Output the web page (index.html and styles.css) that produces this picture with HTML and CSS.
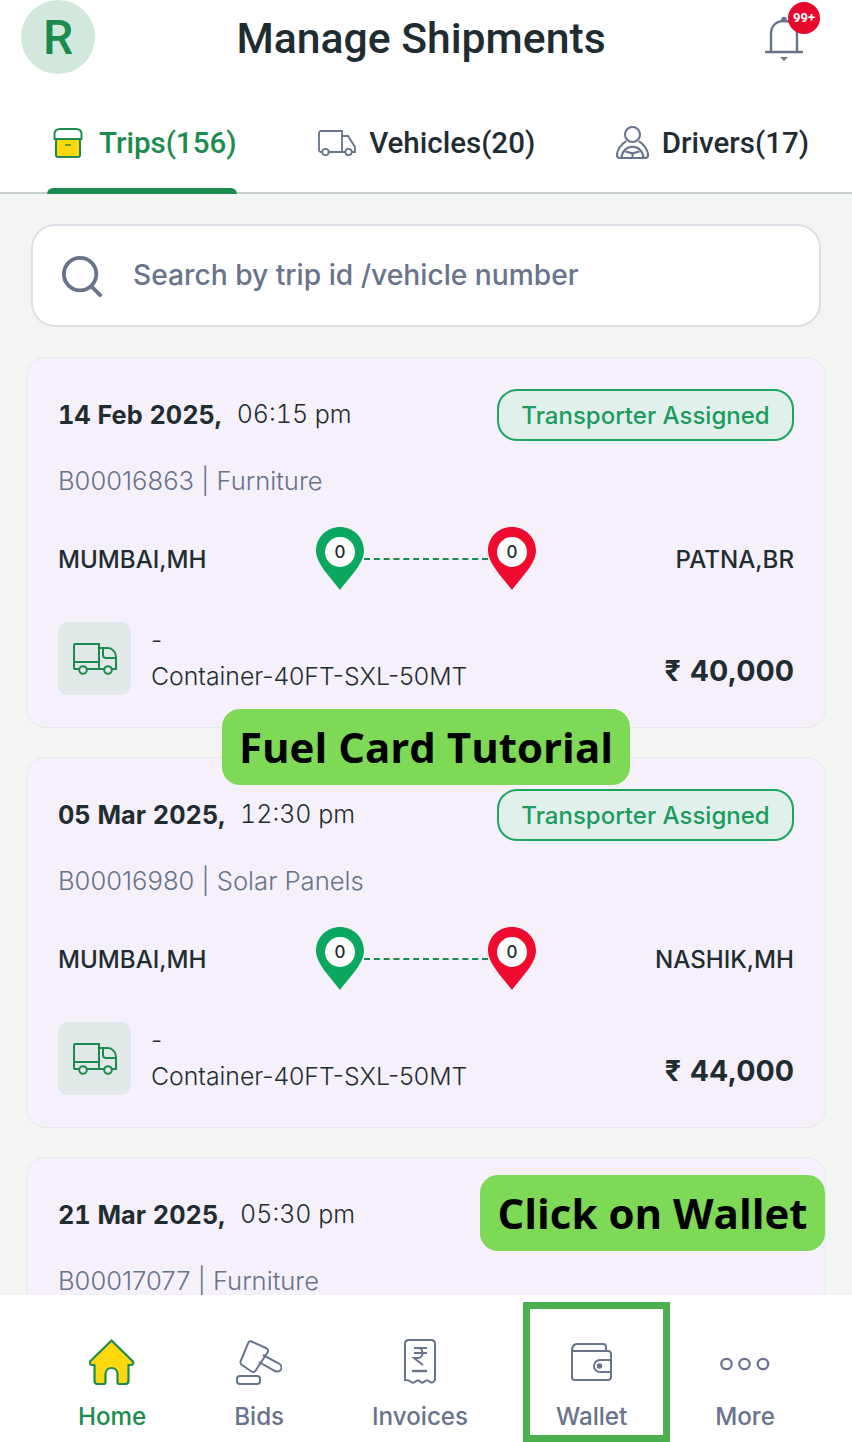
FILE: index.html
```html
<!DOCTYPE html>
<html lang="en">
<head>
  <meta charset="UTF-8">
  <meta name="viewport" content="width=device-width, initial-scale=1.0">
  <title>Manage Shipments</title>
  <link rel="stylesheet" href="styles.css">
</head>
<body>

<div class="app">

  <header class="top">
    <div class="top-row">
      <div class="avatar">R</div>
      <h1 class="title">Manage Shipments</h1>
      <div class="bell">
        <svg width="38" height="46" viewBox="0 0 38 46" fill="none" stroke="#68738c" stroke-width="2.4">
          <path d="M6 35V18C6 10 11 5 19 5C27 5 32 10 32 18V35"/>
          <path d="M1 36H37" stroke-width="2.6" stroke-linecap="round"/>
          <circle cx="19" cy="3.500" r="2.800" fill="#68738c" stroke="none"/>
          <path d="M15 41H23L19 45Z" fill="#68738c" stroke="none"/>
        </svg>
        <span class="bell-count">99+</span>
      </div>
    </div>
    <nav class="tabs">
      <div class="tab tab-active">
        <svg width="30" height="30" viewBox="0 0 30 30" fill="none" stroke="#1c8c4e" stroke-width="2">
          <rect x="3" y="11" width="24" height="18" rx="2" fill="#fdd80f"/>
          <path d="M1.500 11V6C1.500 3 3.500 1 7 1H23C26.500 1 28.500 3 28.500 6V11Z" fill="#fff"/>
          <path d="M12 17H18" stroke-width="1.400"/>
        </svg>
        <span>Trips(156)</span>
      </div>
      <div class="tab">
        <svg width="38" height="26" viewBox="0 0 38 26" fill="none" stroke="#68738c" stroke-width="1.800">
          <path d="M4 22H3C2 22 1 21 1 20V3C1 2 2 1 3 1H24V22H11"/>
          <path d="M24 6H30L37 17V22H34M27 22H24"/>
          <circle cx="7.500" cy="22" r="3.200"/>
          <circle cx="30.500" cy="22" r="3.200"/>
        </svg>
        <span>Vehicles(20)</span>
      </div>
      <div class="tab">
        <svg width="33" height="33" viewBox="0 0 35 35" fill="none" stroke="#68738c" stroke-width="2.200">
          <circle cx="17.500" cy="9" r="8"/>
          <path d="M11 16C5 19 1 26 1 31C1 33 2 34 4 34H31C33 34 34 33 34 31C34 26 30 19 24 16"/>
          <path d="M6 34C6 27 11 22 17.500 22C24 22 29 27 29 34"/>
          <path d="M10 27L17.500 29L25 27M17.500 29V34"/>
        </svg>
        <span>Drivers(17)</span>
      </div>
    </nav>
  </header>

  <main class="content">
    <div class="search">
      <svg width="42" height="42" viewBox="0 0 44 44" fill="none" stroke="#68738c" stroke-width="4" stroke-linecap="round">
        <circle cx="20" cy="20" r="17"/>
        <path d="M32 33L41 42"/>
      </svg>
      <span class="search-text">Search by trip id /vehicle number</span>
    </div>

    <div class="card">
      <div class="card-top">
        <div class="when"><b>14 Feb 2025,</b><span>06:15 pm</span></div>
        <div class="status">Transporter Assigned</div>
      </div>
      <div class="ref">B00016863 | Furniture</div>
      <div class="route">
        <div class="city">MUMBAI,MH</div>
        <div class="pins">
          <div class="pin">
            <svg width="48" height="63" viewBox="0 0 48 63"><path d="M24 0C37 0 48 10 48 24C48 36 34 50 24 63C14 50 0 36 0 24C0 10 11 0 24 0Z" fill="#0aa85f"/></svg>
            <span class="pin-num">0</span>
          </div>
          <div class="dash"></div>
          <div class="pin">
            <svg width="48" height="63" viewBox="0 0 48 63"><path d="M24 0C37 0 48 10 48 24C48 36 34 50 24 63C14 50 0 36 0 24C0 10 11 0 24 0Z" fill="#ee0b2f"/></svg>
            <span class="pin-num">0</span>
          </div>
        </div>
        <div class="city city-end">PATNA,BR</div>
      </div>
      <div class="card-bottom">
        <div class="truck">
          <svg width="44" height="32" viewBox="0 0 44 32" fill="none" stroke="#1c8c4e" stroke-width="2">
            <path d="M7 26H2C1.500 26 1 25.500 1 25V2C1 1.500 1.500 1 2 1H26V26H13"/>
            <path d="M1 19H26"/>
            <path d="M26 5H35C39 5 43 9 43 14V26H38M32 26H26"/>
            <path d="M30 5V12C30 14 31 15 33 15H43"/>
            <circle cx="10" cy="27" r="3.800"/>
            <circle cx="35" cy="27" r="3.800"/>
          </svg>
        </div>
        <div class="vehicle">
          <div>-</div>
          <div>Container-40FT-SXL-50MT</div>
        </div>
        <div class="price">₹ 40,000</div>
      </div>
    </div>

    <div class="card">
      <div class="card-top">
        <div class="when"><b>05 Mar 2025,</b><span>12:30 pm</span></div>
        <div class="status">Transporter Assigned</div>
      </div>
      <div class="ref">B00016980 | Solar Panels</div>
      <div class="route">
        <div class="city">MUMBAI,MH</div>
        <div class="pins">
          <div class="pin">
            <svg width="48" height="63" viewBox="0 0 48 63"><path d="M24 0C37 0 48 10 48 24C48 36 34 50 24 63C14 50 0 36 0 24C0 10 11 0 24 0Z" fill="#0aa85f"/></svg>
            <span class="pin-num">0</span>
          </div>
          <div class="dash"></div>
          <div class="pin">
            <svg width="48" height="63" viewBox="0 0 48 63"><path d="M24 0C37 0 48 10 48 24C48 36 34 50 24 63C14 50 0 36 0 24C0 10 11 0 24 0Z" fill="#ee0b2f"/></svg>
            <span class="pin-num">0</span>
          </div>
        </div>
        <div class="city city-end">NASHIK,MH</div>
      </div>
      <div class="card-bottom">
        <div class="truck">
          <svg width="44" height="32" viewBox="0 0 44 32" fill="none" stroke="#1c8c4e" stroke-width="2">
            <path d="M7 26H2C1.500 26 1 25.500 1 25V2C1 1.500 1.500 1 2 1H26V26H13"/>
            <path d="M1 19H26"/>
            <path d="M26 5H35C39 5 43 9 43 14V26H38M32 26H26"/>
            <path d="M30 5V12C30 14 31 15 33 15H43"/>
            <circle cx="10" cy="27" r="3.800"/>
            <circle cx="35" cy="27" r="3.800"/>
          </svg>
        </div>
        <div class="vehicle">
          <div>-</div>
          <div>Container-40FT-SXL-50MT</div>
        </div>
        <div class="price">₹ 44,000</div>
      </div>
    </div>

    <div class="card">
      <div class="card-top">
        <div class="when"><b>21 Mar 2025,</b><span>05:30 pm</span></div>
      </div>
      <div class="ref">B00017077 | Furniture</div>
    </div>
  </main>

  <nav class="bottom">
    <div class="bottom-item bottom-active">
      <div class="bottom-icon">
        <svg width="46" height="46" viewBox="0 0 46 46" stroke="#1c8c4e" stroke-width="2.200" stroke-linejoin="round">
          <path d="M22.500 1.500L43.500 22C45 24 44 26 42 26H39.500V42C39.500 44 38 45 36 45H30C29 45 28.500 44.500 28.500 43V35C28.500 27 16.500 27 16.500 35V43C16.500 44.500 16 45 15 45H9C7 45 5.500 44 5.500 42V26H3C1 26 0 24 1.500 22Z" fill="#fdd80f"/>
        </svg>
      </div>
      <span>Home</span>
    </div>
    <div class="bottom-item">
      <div class="bottom-icon">
        <svg width="46" height="45" viewBox="0 0 46 45" fill="none" stroke="#68738c" stroke-width="2">
          <path d="M15.500 1.500L30 8C32 9 32.500 11 31.500 12.500L20 30C19 32 17 32.500 15.500 31.500L6 25C4.500 24 4 22 5 20.500L12 3.500C12.500 1.500 13.500 1 15.500 1.500Z"/>
          <path d="M27 15L43 23.500C45.500 25 46 28 45 29.500C44 31.500 41 32 39 31L23 22"/>
          <rect x="1" y="36" width="23" height="8" rx="3"/>
        </svg>
      </div>
      <span>Bids</span>
    </div>
    <div class="bottom-item">
      <div class="bottom-icon">
        <svg width="32" height="46" viewBox="0 0 32 46" fill="none" stroke="#68738c" stroke-width="2">
          <path d="M1 41V5C1 2.500 2.500 1 5 1H27C29.500 1 31 2.500 31 5V41C29 44 27 44 25.500 42.500C24 41 22 41 20.500 42.500C19 44 17.500 44 16 42.500C14.500 41 13 41 11.500 42.500C10 44 8 44 6.500 42.500C5 41 3 41 1 41Z"/>
          <path d="M10 9H23M10 14H23M14 9C20 9 20 19 14 19H10L19 26"/>
          <path d="M8 32H23" stroke-width="2.400"/>
        </svg>
      </div>
      <span>Invoices</span>
    </div>
    <div class="bottom-item">
      <div class="bottom-icon">
        <svg width="41" height="38" viewBox="0 0 41 38" fill="none" stroke="#68738c" stroke-width="2">
          <path d="M1 8C1 3 3 1 6 1H32C34 1 35 2 35 4V8"/>
          <path d="M1 8V34C1 36 2 37 4 37H37C39 37 40 36 40 34V11C40 9 39 8 37 8Z"/>
          <path d="M40 17H29C25.500 17 23 20 23 23C23 26 25.500 29 29 29H40Z" fill="#fff"/>
          <circle cx="28.500" cy="23" r="1.800" fill="#68738c"/>
        </svg>
      </div>
      <span>Wallet</span>
    </div>
    <div class="bottom-item">
      <div class="bottom-icon">
        <svg width="50" height="18" viewBox="0 0 50 18" fill="none" stroke="#68738c" stroke-width="2.200">
          <circle cx="6.500" cy="11" r="5.200"/>
          <circle cx="24.500" cy="11" r="5.200"/>
          <circle cx="43" cy="11" r="5.200"/>
        </svg>
      </div>
      <span>More</span>
    </div>
  </nav>

  <div class="tag tag-fuel">Fuel Card Tutorial</div>
  <div class="tag tag-wallet">Click on Wallet</div>
  <div class="wallet-box"></div>

</div>

</body>
</html>
```

FILE: styles.css
```css
* {
  box-sizing: border-box;
}

html, body {
  margin: 0;
  padding: 0;
}

body {
  font-family: 'Inter', sans-serif;
  color: #1f2d33;
  background: #f2f5f1;
}

.app {
  position: relative;
  width: 852px;
  height: 1442px;
  overflow: hidden;
  display: flex;
  flex-direction: column;
}

/* header + tabs */
.top {
  background: #fff;
  height: 194px;
  flex-shrink: 0;
  border-bottom: 2px solid #c9ced1;
}

.top-row {
  display: flex;
  align-items: center;
  justify-content: space-between;
  height: 76px;
  padding: 0 49px 0 21px;
}

.avatar {
  width: 74px;
  height: 74px;
  align-self: flex-start;
  border-radius: 50%;
  background: #d2e8dc;
  color: #1c8c4e;
  font-family: 'Roboto', sans-serif;
  font-weight: 500;
  font-size: 48px;
  display: flex;
  align-items: center;
  justify-content: center;
}

.title {
  margin: 0 18px 0 0;
  font-family: 'Roboto', sans-serif;
  font-weight: 500;
  font-size: 42.700px;
  color: #1f2d33;
}

.bell {
  position: relative;
  width: 38px;
  height: 46px;
  margin-top: 1px;
}

.bell svg {
  display: block;
}

.bell-count {
  position: absolute;
  top: -14px;
  left: 23px;
  width: 32px;
  height: 32px;
  border-radius: 50%;
  background: #e8082e;
  color: #fff;
  font-family: 'Roboto', sans-serif;
  font-weight: 700;
  font-size: 13px;
  display: flex;
  align-items: center;
  justify-content: center;
}

.tabs {
  display: flex;
  justify-content: space-between;
  height: 116px;
  padding: 0 43px 0 47px;
}

.tab {
  display: flex;
  align-items: center;
  gap: 13px;
  height: 100%;
  padding-top: 17px;
  font-family: 'Roboto', sans-serif;
  font-weight: 500;
  font-size: 29.500px;
  color: #1f2d33;
}

.tab-active {
  position: relative;
  color: #1c8c4e;
  padding: 17px 1px 0 6px;
  gap: 16px;
}

.tab-active::after {
  content: "";
  position: absolute;
  left: 0;
  right: 0;
  bottom: -2px;
  height: 6px;
  background: #1c8c4e;
  border-radius: 6px 6px 0 0;
}

/* list */
.content {
  flex: 1;
  min-height: 0;
  overflow: hidden;
  padding: 30px 26px 0;
}

.search {
  display: flex;
  align-items: center;
  gap: 30px;
  height: 103px;
  margin: 0 5px 30px;
  padding-left: 28px;
  background: #fff;
  border: 2px solid #dcdfe6;
  border-radius: 24px;
}

.search-text {
  margin-top: -2px;
  font-size: 28.200px;
  font-weight: 500;
  color: #68738c;
}

.card {
  height: 371px;
  margin-bottom: 29px;
  padding: 31px;
  background: #f5f0f9;
  border: 1px solid #e8e8ec;
  border-radius: 20px;
}

.card-top {
  display: flex;
  align-items: center;
  justify-content: space-between;
  height: 52px;
}

.when {
  display: flex;
  gap: 15px;
  margin-top: -2px;
  font-size: 25.300px;
  font-variant-numeric: tabular-nums;
}

.when span {
  font-size: 25px;
  font-weight: 300;
}

.status {
  width: 297px;
  height: 52px;
  border: 2px solid #1ca362;
  border-radius: 20px;
  background: #e2f0ec;
  color: #1c9c5c;
  font-size: 24px;
  font-weight: 500;
  display: flex;
  align-items: center;
  justify-content: center;
}

.ref {
  margin-top: 25px;
  font-size: 25.600px;
  font-weight: 300;
  line-height: 30px;
  color: #68738c;
}

.route {
  display: grid;
  grid-template-columns: 1fr auto 1fr;
  align-items: center;
  margin-top: 31px;
}

.city {
  font-size: 24.100px;
  font-weight: 500;
  padding-top: 2px;
}

.city-end {
  text-align: right;
}

.pins {
  display: flex;
  align-items: center;
}

.pin {
  position: relative;
  width: 48px;
  height: 63px;
}

.pin svg {
  display: block;
}

.pin-num {
  position: absolute;
  left: 9px;
  top: 10px;
  width: 30px;
  height: 30px;
  border-radius: 50%;
  background: #fff;
  font-size: 17px;
  font-weight: 500;
  display: flex;
  align-items: center;
  justify-content: center;
}

.dash {
  width: 124px;
  border-top: 2px dashed #1c8c4e;
}

.card-bottom {
  display: flex;
  align-items: center;
  margin-top: 32px;
  height: 73px;
}

.truck {
  width: 73px;
  height: 73px;
  border-radius: 10px;
  background: #e1e9e8;
  display: flex;
  align-items: center;
  justify-content: center;
}

.vehicle {
  margin: -2px 0 0 20px;
  font-size: 24.800px;
  font-weight: 300;
  line-height: 36px;
}

.price {
  margin-left: auto;
  margin-top: 24px;
  font-size: 28.600px;
  font-weight: 700;
  word-spacing: 2px;
}

/* bottom bar */
.bottom {
  flex-shrink: 0;
  height: 147px;
  background: #fff;
  display: flex;
  justify-content: space-between;
  padding: 40px 77px 0 78px;
}

.bottom-item {
  display: flex;
  flex-direction: column;
  align-items: center;
  font-size: 24.200px;
  font-weight: 500;
  line-height: 30px;
  color: #68738c;
}

.bottom-icon {
  height: 54px;
  margin-bottom: 13px;
  display: flex;
  align-items: center;
}

.bottom-active {
  color: #1c8c4e;
}

/* tutorial overlays */
.tag {
  position: absolute;
  padding-bottom: 2px;
  background: #7ed957;
  color: #000;
  border-radius: 18px;
  font-family: 'Open Sans', sans-serif;
  font-weight: 700;
  font-size: 42px;
  display: flex;
  align-items: center;
  justify-content: center;
}

.tag-fuel {
  left: 222px;
  top: 709px;
  width: 408px;
  height: 76px;
}

.tag-wallet {
  left: 480px;
  top: 1175px;
  width: 345px;
  height: 76px;
}

.wallet-box {
  position: absolute;
  left: 523px;
  top: 1302px;
  width: 147px;
  height: 140px;
  border: 7px solid #4caf50;
}
```
